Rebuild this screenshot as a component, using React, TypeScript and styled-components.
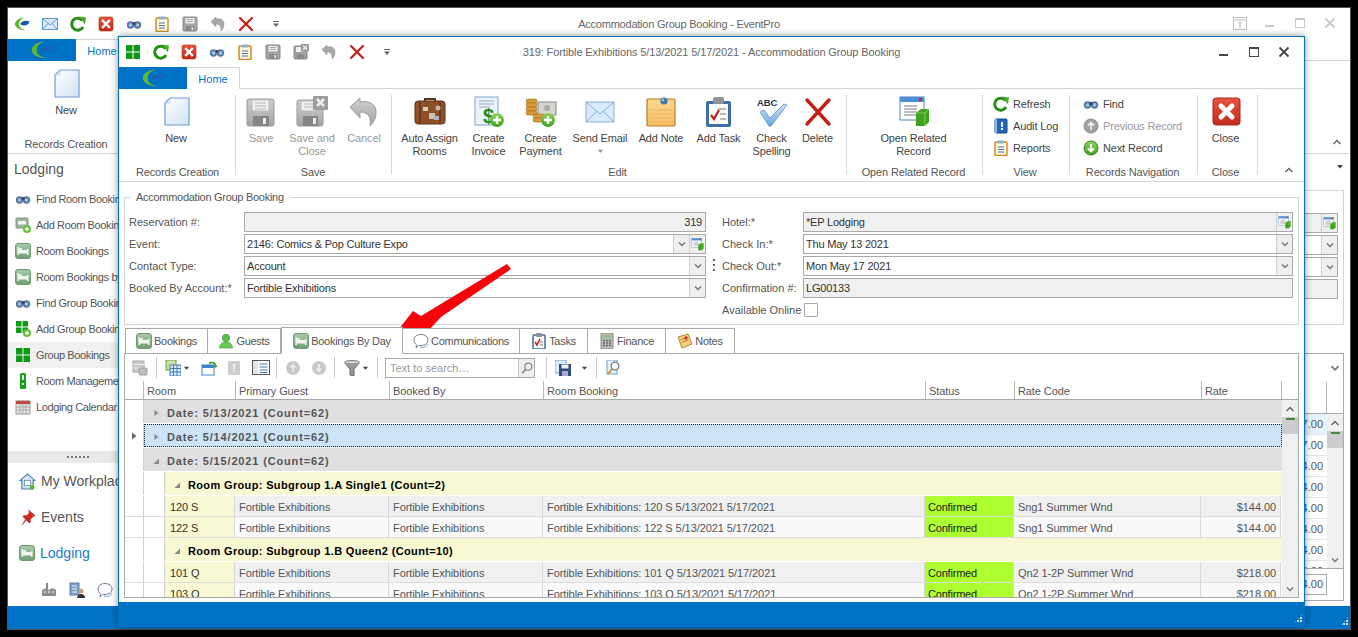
import React, { ReactNode } from "react";
import styled, { createGlobalStyle } from "styled-components";

const Global = createGlobalStyle`
  html, body { margin: 0; padding: 0; background: #000; height: 100%; overflow: hidden; }
  body { font-family: "Liberation Sans", Arial, sans-serif; font-size: 11px; color: #444; }
  * { box-sizing: border-box; }
`;

const icons: Record<string, [number, ReactNode]> = {
  logo: [40, <><path d="M26 6C12 6 3 13 3 20c0 8 11 14 25 14-11-2-17-7-17-14 0-7 6-12 15-14z" fill="#62b82e" /><path d="M15 21c6-5 15-7 24-7-4 5-13 9-24 7z" fill="#1f5ea8" /></>],
  logoSm: [16, <><path d="M11 1.500C5 1.500 1 5 1 8c0 3.500 5 6 11 6.500-4-1.500-7-3-7-6 0-3 2-6 6-7z" fill="#5cb531" /><path d="M6 8c2-3 6-4 9.500-2.500C15 9 10 11 6 8z" fill="#1a5ba6" /></>],
  mail: [16, <><rect x=".5" y="2.500" width="15" height="11" fill="#dbeafa" stroke="#5f9bd4" /><path d="M1 3l7 6 7-6M1 13l5-5.500M15 13l-5-5.500" fill="none" stroke="#5f9bd4" /></>],
  refresh: [16, <><path d="M12.500 4.500A6 6 0 1 0 13 11" fill="none" stroke="#2c8c1c" strokeWidth="3" /><path d="M9 .5l7 1-1 7z" fill="#46ad2a" /></>],
  closeRed: [16, <><rect x="1" y="1" width="14" height="14" rx="2" fill="url(#gRed)" stroke="#a82a18" strokeWidth=".6" /><path d="M5 5l6 6M11 5l-6 6" stroke="#fff" strokeWidth="2.400" strokeLinecap="square" /></>],
  closeBig: [32, <><rect x="3" y="2" width="27" height="27" rx="3" fill="url(#gRed)" stroke="#a82a18" /><path d="M11 10l11 11M22 10L11 21" stroke="#fff" strokeWidth="5" strokeLinecap="round" /></>],
  binoc: [16, <><circle cx="4.500" cy="9" r="3.700" fill="#557aa3" /><circle cx="11.500" cy="9" r="3.700" fill="#557aa3" /><circle cx="4.500" cy="9" r="1.800" fill="#a9c4e0" /><circle cx="11.500" cy="9" r="1.800" fill="#a9c4e0" /><rect x="6.500" y="6" width="3" height="3" fill="#3e4b59" /></>],
  clip: [16, <><rect x="2" y="2" width="12" height="13.500" rx="1" fill="#fff7dc" stroke="#c98a1a" strokeWidth="1.400" /><rect x="5" y=".5" width="6" height="3" fill="#8eb0d0" /><path d="M5 7h6M5 9.500h6M5 12h6" stroke="#4a78ab" /></>],
  save: [16, <><rect x="1" y="1" width="14" height="14" rx="1" fill="#a5a5a5" stroke="#8a8a8a" /><rect x="3.500" y="2" width="9" height="5.500" fill="#ececec" /><path d="M5 3.500h6M5 5.500h6" stroke="#aaa" /><rect x="4" y="10" width="8" height="5" fill="#8c8c8c" /><rect x="9.500" y="11" width="1.500" height="3" fill="#e6e6e6" /></>],
  saveClose: [16, <><rect x="1" y="2" width="13" height="13" rx="1" fill="#a0a0a0" stroke="#8a8a8a" /><rect x="3" y="3" width="7" height="5" fill="#ececec" /><rect x="4" y="10.500" width="7" height="4.500" fill="#888" /><rect x="8" y="0" width="8" height="7.500" fill="#9b9b9b" /><path d="M10 1.700l4 4M14 1.700l-4 4" stroke="#eee" strokeWidth="1.300" /></>],
  saveBig: [32, <><rect x="2" y="3" width="27" height="27" rx="2" fill="url(#gGray)" stroke="#999" /><rect x="7" y="4" width="17" height="11" fill="#f0f0f0" stroke="#bbb" /><path d="M10 7h11M10 10h11M10 13h11" stroke="#b5b5b5" /><rect x="8" y="20" width="16" height="10" fill="#858585" /><rect x="18" y="22" width="3" height="6" fill="#eee" /></>],
  saveCloseBig: [32, <><rect x="1" y="4" width="26" height="26" rx="2" fill="url(#gGray)" stroke="#999" /><rect x="5" y="5" width="15" height="10" fill="#f0f0f0" stroke="#bbb" /><path d="M8 8h9M8 11h9" stroke="#b5b5b5" /><rect x="7" y="20" width="15" height="10" fill="#858585" /><rect x="17" y="22" width="3" height="6" fill="#eee" /><rect x="17" y="0" width="15" height="14" rx="1" fill="#9c9c9c" /><path d="M21 3l7 7M28 3l-7 7" stroke="#eee" strokeWidth="2.600" /></>],
  undo: [16, <path d="M6 3c5-1 8 1 8 5 0 3-1 5-3 7 .5-3 0-7-5-7v3L1 5.500 6 1z" fill="#a8a8a8" stroke="#8f8f8f" strokeWidth=".5" />],
  undoBig: [32, <path d="M12 6c10-2 16 3 16 10 0 6-2 10-6 14 1-7 0-14-10-14v6L2 11 12 2z" fill="url(#gGray)" stroke="#9a9a9a" />],
  bigX: [16, <path d="M2 2l12 12M14 2L2 14" stroke="#c61f18" strokeWidth="2.200" strokeLinecap="round" />],
  xLarge: [32, <path d="M5 4l22 24M27 4L5 28" stroke="#c41d18" strokeWidth="3.400" strokeLinecap="round" />],
  gridGreen: [16, <><rect x="1" y="1" width="6.500" height="6.500" fill="#0c9a17" /><rect x="8.500" y="1" width="6.500" height="6.500" fill="#0c9a17" /><rect x="1" y="8.500" width="6.500" height="6.500" fill="#0c9a17" /><rect x="8.500" y="8.500" width="6.500" height="6.500" fill="#0c9a17" /></>],
  addGrid: [16, <><rect x="1" y="0" width="5.500" height="5.500" fill="#0c9a17" /><rect x="7.500" y="0" width="5.500" height="5.500" fill="#0c9a17" /><rect x="1" y="6.500" width="5.500" height="5.500" fill="#0c9a17" /><rect x="7.500" y="6.500" width="5.500" height="5.500" fill="#0c9a17" /><circle cx="12" cy="12" r="4" fill="#6bbf3a" /><path d="M10 12h4M12 10v4" stroke="#fff" strokeWidth="1.400" /></>],
  doc: [32, <><path d="M10 2h19v27H5V7z" fill="url(#gDoc)" stroke="#6d9ed2" strokeWidth="1.200" /><path d="M5 7h5V2" fill="none" stroke="#b5cde8" /></>],
  suitcase: [32, <><path d="M11 6V3h10v3" fill="none" stroke="#5c3318" strokeWidth="2" /><rect x="1" y="5" width="30" height="23" rx="3" fill="#8f5029" stroke="#5e3116" /><rect x="5" y="6" width="2" height="21" fill="#6d3a1b" /><rect x="25" y="6" width="2" height="21" fill="#6d3a1b" /><rect x="15" y="17" width="6" height="6" fill="#c8c3b5" /><rect x="9" y="11" width="5" height="4" fill="#d6d0bf" /><circle cx="24" cy="12" r="2.500" fill="#c0b9a5" /><rect x="20" y="20" width="5" height="4" fill="#aeb5ba" /></>],
  invoice: [32, <><rect x="2" y="1" width="23" height="28" fill="#eaf3fc" stroke="#7fa8d2" /><path d="M6 5h15M6 8h15M6 11h11" stroke="#9ab" /><text x="10" y="27" fontSize="20" fontWeight="bold" fontFamily="Liberation Sans" fill="#1c8a1c">$</text><circle cx="24" cy="24" r="7" fill="url(#gGreen)" /><path d="M20 24h8M24 20v8" stroke="#fff" strokeWidth="2.400" /></>],
  payment: [32, <><rect x="13" y="6" width="18" height="13" fill="#d6d6ce" stroke="#888" /><circle cx="22" cy="12" r="3" fill="#aaa" /><g fill="#d99a3a" stroke="#9a6a1d" strokeWidth=".6"><rect x="1" y="3" width="11" height="4" rx="2" /><rect x="1" y="7" width="11" height="4" rx="2" /><rect x="1" y="11" width="11" height="4" rx="2" /><rect x="1" y="15" width="11" height="4" rx="2" /><rect x="8" y="18" width="11" height="4" rx="2" /><rect x="8" y="22" width="11" height="4" rx="2" /></g><circle cx="23" cy="24" r="7" fill="url(#gGreen)" /><path d="M19 24h8M23 20v8" stroke="#fff" strokeWidth="2.400" /></>],
  mailBig: [32, <><rect x="2" y="6" width="28" height="20" fill="#d9ebfa" stroke="#7fb0dc" /><path d="M3 7l13 11L29 7M3 25l10-10M29 25L19 15" fill="none" stroke="#7fb0dc" /></>],
  note: [32, <><rect x="2" y="3" width="28" height="27" rx="1" fill="url(#gNote)" stroke="#c27a20" strokeWidth="1.200" /><path d="M4 14h24M4 18h24M4 22h24M4 26h24" stroke="#eab866" /><circle cx="19" cy="5" r="3.600" fill="#3e76b4" /><circle cx="18" cy="4" r="1.300" fill="#a9c9ea" /></>],
  taskBig: [32, <><rect x="3" y="5" width="25" height="26" rx="2" fill="#3f6ea6" /><rect x="6" y="8" width="19" height="20" fill="#fafafa" /><rect x="10" y="1" width="11" height="7" rx="2" fill="#8f9398" /><path d="M8 19l3 4 5-9" fill="none" stroke="#c41d18" strokeWidth="2.200" /><path d="M15 13h8M17 18h6M17 23h6" stroke="#777" /></>],
  check: [32, <><text x="1" y="10" fontSize="9.500" fontWeight="bold" fontFamily="Liberation Sans" fill="#27324a">ABC</text><path d="M4 16l4-2 6 8L28 8l3 1-16 21h-2z" fill="url(#gBlue)" stroke="#5a8fc4" strokeWidth=".8" /></>],
  openRel: [32, <><rect x="2" y="1" width="24" height="23" fill="#fff" stroke="#4c84c4" /><rect x="2" y="1" width="24" height="5" fill="#4c8fd6" /><rect x="21" y="2" width="3" height="3" fill="#d22" /><path d="M6 10h13M6 13h13M6 16h13M6 19h13" stroke="#778" /><path d="M18 17l5-4h8v13l-4 4h-9z" fill="#3ea21c" /><path d="M18 17h9v13M27 17l4-4" fill="none" stroke="#7ed055" /></>],
  audit: [16, <><rect x="2" y="1" width="12" height="14" rx="1" fill="#1f66bd" stroke="#12458a" /><rect x="2" y="1" width="2" height="14" fill="#8fb9e6" /><rect x="8" y="4" width="2" height="5" fill="#fff" /><rect x="8" y="10" width="2" height="2" fill="#fff" /></>],
  prevC: [16, <><circle cx="8" cy="8" r="7" fill="#a2a2a2" stroke="#8a8a8a" /><path d="M8 12V5M5 7.500L8 4.500l3 3" fill="none" stroke="#e8e8e8" strokeWidth="1.800" /></>],
  nextC: [16, <><circle cx="8" cy="8" r="7" fill="url(#gGreen)" stroke="#2f7f1f" /><path d="M8 4v7M5 8.500l3 3 3-3" fill="none" stroke="#fff" strokeWidth="1.800" /></>],
  upG: [16, <><circle cx="8" cy="8" r="7" fill="#c9c9c9" /><path d="M8 12V5M5.500 7.500L8 5l2.500 2.500" fill="none" stroke="#efefef" strokeWidth="1.600" /></>],
  downG: [16, <><circle cx="8" cy="8" r="7" fill="#c9c9c9" /><path d="M8 4v7M5.500 8.500L8 11l2.500-2.500" fill="none" stroke="#efefef" strokeWidth="1.600" /></>],
  bed: [16, <><rect x=".5" y=".5" width="15" height="15" rx="2.500" fill="url(#gBed)" stroke="#6e9a70" /><rect x="2.500" y="4" width="1.300" height="8" fill="#fff" /><rect x="12.200" y="6" width="1.300" height="6" fill="#fff" /><rect x="3.500" y="7" width="9" height="3.500" fill="#f4f8f4" /><rect x="4" y="5" width="3" height="2" fill="#e3efe3" /></>],
  guest: [16, <><circle cx="8" cy="5" r="3.700" fill="#5cbc4a" stroke="#3a9a2c" strokeWidth=".6" /><path d="M1.500 15c0-4 3-6 6.500-6s6.500 2 6.500 6z" fill="#6bc957" stroke="#3a9a2c" strokeWidth=".6" /></>],
  bubble: [16, <><path d="M8 1.500c4 0 7 2.300 7 5.500s-3 5.500-7 5.500c-1 0-1.500 0-2.500-.2L3 15l.5-3.200C2 10.800 1 9 1 7c0-3.200 3-5.500 7-5.500z" fill="#fff" stroke="#6d7e8f" /><path d="M7 14c3 1 7 0 8-3" fill="none" stroke="#6aa8dc" /></>],
  taskTab: [16, <><rect x="2" y="2" width="12" height="14" rx="1" fill="#fff" stroke="#3f6ea6" strokeWidth="1.500" /><rect x="5" y="0" width="6" height="4" rx="1" fill="#8f9398" /><path d="M4 9l2 3 3-6" fill="none" stroke="#c41d18" strokeWidth="1.500" /><path d="M9 9h3M9 12h3" stroke="#777" /></>],
  calc: [16, <><rect x="2" y="0" width="12" height="16" rx="1" fill="#b9bdb6" stroke="#85897f" /><rect x="4" y="2" width="8" height="3" fill="#8fc28a" /><path d="M4 7.500h2M7 7.500h2M10 7.500h2M4 10h2M7 10h2M10 10h2M4 12.500h2M7 12.500h2M10 12.500h2" stroke="#666" strokeWidth="1.400" /></>],
  noteTab: [16, <><path d="M1 4l10-3 4 10-10 4z" fill="#f2cf7a" stroke="#b58a32" /><path d="M3.500 7l7-2.500M4.500 9.500l7-2.500" stroke="#b58a32" /><circle cx="9" cy="5" r="1.700" fill="#c33" /></>],
  addRoom: [16, <><rect x="1" y="1" width="12" height="10" rx="1" fill="#9cb49c" stroke="#7a947a" /><rect x="3" y="4" width="8" height="3.500" fill="#f2f6f2" /><circle cx="12" cy="12" r="4" fill="#6bbf3a" /><path d="M10 12h4M12 10v4" stroke="#fff" strokeWidth="1.400" /></>],
  remote: [16, <><rect x="5" y="0" width="6" height="16" rx="1.500" fill="#14a018" /><rect x="7" y="2" width="2" height="5" rx="1" fill="#fff" /><rect x="7" y="10" width="2" height="2" fill="#cfe" /></>],
  calendar: [16, <><rect x="1" y="2" width="14" height="13" fill="#e4e4e4" stroke="#999" /><rect x="1" y="2" width="14" height="3" fill="#c9423c" /><path d="M4 1v2M8 1v2M12 1v2" stroke="#888" /><path d="M1 8h14M1 11h14M5 5v10M8 5v10M11 5v10" stroke="#aaa" /></>],
  home: [18, <><path d="M9 1L1 8h2v9h12V8h2z" fill="#cfe1f3" stroke="#4d7fae" strokeWidth="1.200" /><rect x="6" y="8" width="6" height="5" fill="#fff" stroke="#4d7fae" strokeWidth=".7" /><circle cx="14" cy="15" r="2.500" fill="#5cb531" /></>],
  pin: [18, <path d="M10 1l7 6-2 1-3 3 0 3-1 1-3-3-5 5 4-6-3-3 1-1 3 0 3-3z" fill="#d3261f" stroke="#a11814" strokeWidth=".4" />],
  factory: [16, <><rect x="5" y="1" width="2" height="6" fill="#888" /><path d="M1 8l4-2 3 2 3-2 4 2v6H1z" fill="#8c8c8c" /><path d="M3 10h2M7 10h2M11 10h2" stroke="#ddd" strokeWidth="1.500" /></>],
  bldPerson: [16, <><rect x="1" y="1" width="9" height="12" fill="#7fa0c8" stroke="#5d7ea6" /><path d="M3 4h5M3 7h5M3 10h5" stroke="#e5eef8" /><circle cx="12" cy="9" r="2.500" fill="#c99f77" /><path d="M8 16c0-3 2-4 4-4s4 1 4 4z" fill="#333" /></>],
  tbGrid: [16, <><rect x="1" y="1" width="11" height="11" fill="#c9c9c9" stroke="#aaa" /><path d="M1 4.500h11M1 8h11" stroke="#eee" /><rect x="7" y="8" width="8" height="7" rx="1" fill="#bdbdbd" stroke="#a0a0a0" /></>],
  tbColumns: [16, <><rect x="1" y="0" width="10" height="10" fill="#c8e0a8" stroke="#6da32f" /><rect x="5" y="5" width="11" height="11" fill="#dcebfa" stroke="#3a7cc4" /><path d="M5 8.500h11M5 12h11M8.500 5v11M12 5v11" stroke="#3a7cc4" /></>],
  tbWindow: [16, <><rect x="1" y="5" width="12" height="10" fill="#fff" stroke="#3a84cc" /><rect x="1" y="5" width="12" height="3" fill="#3a84cc" /><path d="M8 3.500c3-2 6-1 6.500 2" fill="none" stroke="#3c9a20" strokeWidth="1.600" /><path d="M12.500 5.500h4L14.500 8z" fill="#3c9a20" /></>],
  tbBook: [16, <><rect x="2" y="1" width="12" height="14" rx="1" fill="#cdcdcd" /><rect x="7" y="4" width="2" height="5" fill="#efefef" /><rect x="7" y="10" width="2" height="2" fill="#efefef" /></>],
  tbPanel: [18, <><rect x=".5" y="1.500" width="17" height="14" fill="#fff" stroke="#555" /><rect x="1" y="2" width="5" height="13" fill="#e5e5e5" /><path d="M7.500 5h8M7.500 8h8M7.500 11h8M7.500 13.500h8" stroke="#4a78ab" /></>],
  funnel: [16, <><ellipse cx="8" cy="2.500" rx="7.500" ry="2" fill="#d8d8d8" stroke="#777" /><path d="M1 3l5 6v6l4 1V9l5-6" fill="#9a9a9a" stroke="#666" /></>],
  tbSave: [16, <><rect x="0" y="0" width="11" height="13" fill="#dcebfa" stroke="#6aa0d6" /><rect x="4" y="4" width="12" height="12" fill="#2f4c7a" /><rect x="6.500" y="4.500" width="7" height="4" fill="#e8eef6" /><rect x="7" y="11" width="6" height="5" fill="#aac" /></>],
  tbZoom: [16, <><rect x="1" y="0" width="10" height="14" fill="#eaf3fc" stroke="#6aa0d6" /><circle cx="9" cy="6" r="3.800" fill="#fff" stroke="#777" strokeWidth="1.300" /><path d="M6 9l-4 5" stroke="#c9922e" strokeWidth="2" /></>],
  search: [16, <><circle cx="9.500" cy="6.500" r="4" fill="none" stroke="#888" strokeWidth="1.400" /><path d="M6.500 9.500L2.500 14" stroke="#888" strokeWidth="2" /></>],
  chev: [10, <path d="M2 3.500l3 3 3-3" fill="none" stroke="#777" strokeWidth="1.500" />],
  chevUp: [10, <path d="M1.500 7l3.500-3.500L8.500 7" fill="none" stroke="#666" strokeWidth="1.500" />],
  caret: [8, <path d="M1 3h6L4 6.500z" fill="#444" />],
  qatDrop: [8, <><path d="M1 1h6v1H1z" fill="#666" /><path d="M1 3.500h6L4 7z" fill="#666" /></>],
  triR: [8, <path d="M2.500 1l4 3-4 3z" fill="#888" />],
  triD: [8, <path d="M7 1.500V7H1.500z" fill="#888" />],
  triRDark: [8, <path d="M2 0.500l4.500 3.500L2 7.500z" fill="#666" />],
  winPin: [14, <><rect x=".5" y=".5" width="13" height="12" fill="none" stroke="#bbb" /><path d="M.5 3h13M7 11V5M4.500 7L7 4.500 9.500 7" fill="none" stroke="#bbb" /></>],
  winMin: [12, <rect x="1" y="8" width="9" height="2" fill="currentColor" />],
  winMax: [12, <><rect x="1.500" y="1.500" width="9" height="9" fill="none" stroke="currentColor" /><rect x="1" y="1" width="10" height="2" fill="currentColor" /></>],
  winClose: [12, <path d="M1.500 1.500l9 9M10.500 1.500l-9 9" stroke="currentColor" strokeWidth="1.800" />],
};

const Svg = styled.svg<{ $s: number }>`
  width: ${(p) => p.$s}px;
  height: ${(p) => p.$s}px;
  flex: none;
  display: block;
`;

const Icon = ({ n, s = 16 }: { n: string; s?: number }) => {
  const [vb, body] = icons[n];
  return (
    <Svg viewBox={`0 0 ${vb} ${vb}`} $s={s}>
      {body}
    </Svg>
  );
};

const Defs = () => (
  <svg width="0" height="0" style={{ position: "absolute" }}>
    <defs>
      <linearGradient id="gRed" x1="0" y1="0" x2="0" y2="1"><stop offset="0" stopColor="#e8543e" /><stop offset="1" stopColor="#c22b1c" /></linearGradient>
      <linearGradient id="gGreen" x1="0" y1="0" x2="0" y2="1"><stop offset="0" stopColor="#8fd45a" /><stop offset="1" stopColor="#3f9f22" /></linearGradient>
      <linearGradient id="gGray" x1="0" y1="0" x2="0" y2="1"><stop offset="0" stopColor="#d0d0d0" /><stop offset="1" stopColor="#a4a4a4" /></linearGradient>
      <linearGradient id="gDoc" x1="0" y1="0" x2="1" y2="1"><stop offset="0" stopColor="#ffffff" /><stop offset="1" stopColor="#cfe2f6" /></linearGradient>
      <linearGradient id="gNote" x1="0" y1="0" x2="0" y2="1"><stop offset="0" stopColor="#f9d98f" /><stop offset="1" stopColor="#f5bd62" /></linearGradient>
      <linearGradient id="gBlue" x1="0" y1="0" x2="0" y2="1"><stop offset="0" stopColor="#cfe4f8" /><stop offset="1" stopColor="#6ea6dc" /></linearGradient>
      <linearGradient id="gBed" x1="0" y1="0" x2="0" y2="1"><stop offset="0" stopColor="#a8cba8" /><stop offset="1" stopColor="#6f9e72" /></linearGradient>
    </defs>
  </svg>
);

/* ---------- Windows ---------- */
const Win = styled.div<{ $l: number; $t: number; $w: number; $h: number; $front?: boolean }>`
  position: absolute;
  left: ${(p) => p.$l}px;
  top: ${(p) => p.$t}px;
  width: ${(p) => p.$w}px;
  height: ${(p) => p.$h}px;
  background: #fff;
  display: flex;
  flex-direction: column;
  overflow: hidden;
  border: 1px solid ${(p) => (p.$front ? "#0072c6" : "#555")};
  ${(p) => p.$front && "box-shadow: 0 0 7px rgba(0,0,0,.45);"}
`;

const TitleRow = styled.div<{ $h: number; $dim?: boolean }>`
  height: ${(p) => p.$h}px;
  flex: none;
  display: grid;
  grid-template-columns: 1fr auto 1fr;
  align-items: center;
  font-size: 11px;
  letter-spacing: ${(p) => (p.$dim ? -0.23 : -0.11)}px;
  color: #666;
`;
const Qat = styled.div`display: flex; align-items: center;`;
const QatSlot = styled.div<{ $w?: number }>`
  width: ${(p) => p.$w ?? 28}px;
  display: flex;
  justify-content: center;
`;
const WinButtons = styled.div<{ $dim?: boolean }>`
  display: flex;
  justify-content: flex-end;
  padding-right: 5px;
  color: ${(p) => (p.$dim ? "#c8c8c8" : "#444")};
`;
const WinBtn = styled.div`
  width: 30px;
  display: flex;
  justify-content: center;
`;

const TabRow = styled.div`
  height: 22px;
  flex: none;
  display: flex;
  border-bottom: 1px solid #d4d4d4;
`;
const AppTab = styled.div`
  width: 68px;
  background: #0072c6;
  display: flex;
  align-items: center;
  justify-content: center;
  margin-bottom: -1px;
`;
const HomeTab = styled.div`
  width: 53px;
  margin-bottom: -1px;
  border: 1px solid #d4d4d4;
  border-bottom: 1px solid #fff;
  border-left: 0;
  background: #fff;
  color: #0072c6;
  font-size: 11px;
  padding-top: 1px;
  display: flex;
  align-items: center;
  justify-content: center;
`;

const Ribbon = styled.div`
  height: 93px;
  flex: none;
  display: flex;
  border-bottom: 1px solid #d4d4d4;
  position: relative;
  letter-spacing: -0.15px;
`;
const Group = styled.div<{ $w: number }>`
  width: ${(p) => p.$w}px;
  flex: none;
  position: relative;
  display: flex;
  flex-direction: column;
  &::after {
    content: "";
    position: absolute;
    right: 0;
    top: 6px;
    bottom: 7px;
    width: 1px;
    background: #d8d8d8;
  }
`;
const GroupBody = styled.div<{ $pl?: number; $pr?: number }>`
  flex: 1;
  display: flex;
  padding-left: ${(p) => p.$pl ?? 0}px;
  padding-right: ${(p) => p.$pr ?? 0}px;
  justify-content: ${(p) => (p.$pl === undefined ? "center" : "flex-start")};
`;
const GroupLabel = styled.div<{ $pr?: number }>`
  height: 16px;
  line-height: 14px;
  text-align: center;
  color: #555;
  white-space: nowrap;
  padding-right: ${(p) => p.$pr ?? 0}px;
`;
const RibBtn = styled.div<{ $w: number; $off?: boolean }>`
  width: ${(p) => p.$w}px;
  flex: none;
  padding-top: 7px;
  display: flex;
  flex-direction: column;
  align-items: center;
  color: ${(p) => (p.$off ? "#9a9a9a" : "#444")};
`;
const RibLabel = styled.div`
  margin-top: 4px;
  line-height: 13px;
  text-align: center;
  white-space: pre-line;
`;
const RibCaret = styled.div`
  margin-top: 2px;
  display: flex;
  justify-content: center;
  opacity: 0.6;
`;
const SmallList = styled.div`
  padding-top: 4px;
  display: flex;
  flex-direction: column;
`;
const SmallItem = styled.div<{ $off?: boolean }>`
  height: 22px;
  display: flex;
  align-items: center;
  gap: 4px;
  white-space: nowrap;
  color: ${(p) => (p.$off ? "#999" : "#444")};
`;
const Collapse = styled.div<{ $r: number }>`
  position: absolute;
  right: ${(p) => p.$r}px;
  bottom: 6px;
`;

/* ---------- Form ---------- */
const FormBox = styled.fieldset`
  margin: 8px 5px 0 5px;
  padding: 8px 5px 0 4px;
  height: 135px;
  flex: none;
  border: 1px solid #d4d4d4;
  min-width: 0;
`;
const Legend = styled.legend`
  margin-left: 1px;
  padding: 0 6px;
  height: 14px;
  line-height: 14px;
  color: #555;
  letter-spacing: -0.28px;
`;
const FormGrid = styled.div`
  display: grid;
  grid-template-columns: 115px 462px 16px 81px 490px;
  grid-auto-rows: 20px;
  row-gap: 2px;
  align-items: center;
`;
const Label = styled.div`
  color: #555;
  white-space: nowrap;
`;
const Field = styled.div<{ $ro?: boolean }>`
  height: 20px;
  display: flex;
  border: 1px solid #a9a9a9;
  background: ${(p) => (p.$ro ? "#f0f0f0" : "#fff")};
  color: #333;
`;
const FieldText = styled.div<{ $right?: boolean }>`
  flex: 1;
  line-height: 18px;
  padding: 0 3px 0 2px;
  letter-spacing: -0.2px;
  text-align: ${(p) => (p.$right ? "right" : "left")};
  white-space: nowrap;
  overflow: hidden;
`;
const FieldBtn = styled.div`
  width: 16px;
  flex: none;
  background: #efefef;
  border-left: 1px solid #d0d0d0;
  display: flex;
  align-items: center;
  justify-content: center;
`;
const Dots = styled.div`
  width: 2px;
  height: 14px;
  margin-left: 7px;
  background: repeating-linear-gradient(#666 0 2px, transparent 2px 5px);
`;
const Box = styled.div`
  width: 14px;
  height: 14px;
  margin-left: 1px;
  border: 1px solid #a9a9a9;
  border-radius: 1px;
  background: #fff;
`;

/* ---------- Tabs + grid ---------- */
const Tabs = styled.div`
  margin: 2px 0 0 6px;
  height: 26px;
  flex: none;
  display: flex;
  align-items: flex-end;
  position: relative;
  z-index: 1;
`;
const TabItem = styled.div<{ $w: number; $on?: boolean }>`
  width: ${(p) => p.$w}px;
  height: ${(p) => (p.$on ? 27 : 25)}px;
  margin-bottom: ${(p) => (p.$on ? -1 : 0)}px;
  display: flex;
  align-items: center;
  justify-content: center;
  gap: 2px;
  background: #fff;
  color: #555;
  letter-spacing: -0.28px;
  white-space: nowrap;
  border: 1px solid #a9a9a9;
  border-left-width: ${(p) => (p.$on ? 1 : 0)}px;
  border-bottom: ${(p) => (p.$on ? "1px solid #fff" : "0")};
  &:first-child { border-left-width: 1px; }
`;
const Panel = styled.div`
  margin: 0 5px;
  flex: none;
  height: 245px;
  border: 1px solid #a9a9a9;
  display: flex;
  flex-direction: column;
  overflow: hidden;
`;
const Toolbar = styled.div`
  height: 27px;
  flex: none;
  display: flex;
  align-items: center;
`;
const Tool = styled.div<{ $ml: number; $w?: number }>`
  margin-left: ${(p) => p.$ml}px;
  width: ${(p) => p.$w ?? 16}px;
  flex: none;
  display: flex;
  justify-content: center;
`;
const ToolSep = styled.div<{ $ml: number }>`
  margin-left: ${(p) => p.$ml}px;
  width: 1px;
  height: 21px;
  background: #c8c8c8;
  flex: none;
`;
const SearchBox = styled.div`
  margin-left: 7px;
  width: 150px;
  height: 20px;
  flex: none;
  display: flex;
  border: 1px solid #a9a9a9;
  color: #999;
  line-height: 18px;
`;
const SearchText = styled.div`
  flex: 1;
  padding: 0 4px;
`;
const SearchBtn = styled.div`
  width: 16px;
  background: #eee;
  border-left: 1px solid #c8c8c8;
  display: flex;
  align-items: center;
  justify-content: center;
`;
const Header = styled.div`
  height: 19px;
  flex: none;
  display: flex;
  border-bottom: 1px solid #a9a9a9;
  padding-left: 18px;
`;
const HeadCell = styled.div<{ $w: number }>`
  width: ${(p) => p.$w}px;
  flex: none;
  padding: 0 3px;
  line-height: 20px;
  color: #555;
  letter-spacing: -0.1px;
  border-left: 1px solid #b8b8b8;
  &:last-child { border-right: 1px solid #b8b8b8; }
`;
const GridBody = styled.div`
  flex: 1;
  min-height: 0;
  display: flex;
  overflow: hidden;
`;
const Rows = styled.div`
  width: 1157px;
  flex: none;
  display: flex;
  flex-direction: column;
`;
const Row = styled.div<{ $h: number; $gap?: string }>`
  height: ${(p) => p.$h}px;
  flex: none;
  display: flex;
  border-bottom: 1px solid ${(p) => p.$gap ?? "#fff"};
`;
const Gutter = styled.div`
  width: 19px;
  flex: none;
  background: #fff;
  border-right: 1px solid #cfcfcf;
  display: flex;
  align-items: center;
  justify-content: center;
`;
const Indent = styled.div`
  width: 21px;
  flex: none;
  background: #fff;
  border-right: 1px solid #cfcfcf;
`;
const GroupCell = styled.div<{ $kind: "date" | "sel" | "room" }>`
  flex: 1;
  display: flex;
  align-items: center;
  gap: 7px;
  padding: 2px 0 0 8px;
  font-weight: bold;
  font-size: 11px;
  letter-spacing: ${(p) => (p.$kind === "room" ? 0.35 : 0.85)}px;
  color: ${(p) => (p.$kind === "room" ? "#000" : "#555")};
  background: ${(p) => (p.$kind === "room" ? "#f8f9d2" : p.$kind === "sel" ? "#cde4f7" : "#e0e0e0")};
  ${(p) => p.$kind === "sel" && "outline: 1px dotted #222; outline-offset: -1px;"}
`;
const Cell = styled.div<{ $w: number; $bg: string; $right?: boolean; $c?: string; $ls?: number; $pl?: number }>`
  width: ${(p) => p.$w}px;
  flex: none;
  background: ${(p) => p.$bg};
  color: ${(p) => p.$c ?? "#555"};
  padding: 0 4px 0 ${(p) => p.$pl ?? 4}px;
  line-height: 22px;
  letter-spacing: ${(p) => p.$ls ?? -0.08}px;
  text-align: ${(p) => (p.$right ? "right" : "left")};
  border-right: 1px solid #d8d8d8;
  white-space: nowrap;
  overflow: hidden;
`;
const Scroll = styled.div`
  width: 16px;
  flex: none;
  background: #f0f0f0;
  display: flex;
  flex-direction: column;
`;
const ScrollBtn = styled.div`
  height: 17px;
  flex: none;
  display: flex;
  align-items: center;
  justify-content: center;
`;
const Thumb = styled.div`
  height: 17px;
  flex: none;
  background: #cdcdcd;
  position: relative;
  &::before {
    content: "";
    position: absolute;
    left: 4px;
    top: 1px;
    width: 9px;
    height: 2px;
    background: #3f8a3f;
  }
`;
const ScrollFill = styled.div`flex: 1;`;
const StatusBar = styled.div<{ $h: number }>`
  height: ${(p) => p.$h}px;
  flex: none;
  margin-top: auto;
  background: #0072c6;
  position: relative;
`;
const Grip = styled.div`
  position: absolute;
  right: 1px;
  bottom: 3px;
  width: 9px;
  height: 9px;
  background:
    radial-gradient(circle at 1px 1px, #cfe4f5 1px, transparent 1px) 0 0 / 3px 3px;
  clip-path: polygon(100% 0, 100% 100%, 0 100%);
`;
const Arrow = styled.svg`
  position: absolute;
  left: 0;
  top: 0;
  width: 1358px;
  height: 637px;
  pointer-events: none;
`;

/* ---------- Back window ---------- */
const BackBody = styled.div`
  flex: 1;
  min-height: 0;
  display: flex;
`;
const Sidebar = styled.div`
  width: 220px;
  flex: none;
  display: flex;
  flex-direction: column;
`;
const SideTitle = styled.div`
  height: 31px;
  padding: 1px 0 0 6px;
  line-height: 28px;
  font-size: 14px;
  color: #555;
`;
const SideList = styled.div`
  padding-top: 1px;
  height: 266px;
  display: flex;
  flex-direction: column;
  flex: none;
`;
const SideItem = styled.div<{ $on?: boolean }>`
  height: 26px;
  padding-left: 7px;
  display: flex;
  align-items: center;
  gap: 5px;
  color: #555;
  letter-spacing: -0.38px;
  white-space: nowrap;
  background: ${(p) => (p.$on ? "#f0f0f0" : "transparent")};
`;
const Splitter = styled.div`
  height: 12px;
  flex: none;
  background: #e9e9e9;
  display: flex;
  justify-content: center;
  align-items: center;
  &::before {
    content: "";
    width: 22px;
    height: 2px;
    margin-left: -80px;
    background: repeating-linear-gradient(90deg, #777 0 2px, transparent 2px 4px);
  }
`;
const NavItem = styled.div<{ $on?: boolean }>`
  height: 36px;
  padding-left: 11px;
  display: flex;
  align-items: center;
  gap: 5px;
  font-size: 14px;
  color: ${(p) => (p.$on ? "#1a7cc8" : "#555")};
  white-space: nowrap;
`;
const NavList = styled.div`
  display: flex;
  flex-direction: column;
`;
const MiniBar = styled.div`
  padding: 11px 0 0 33px;
  display: flex;
  gap: 12px;
`;
const BackMain = styled.div`
  flex: 1;
  min-width: 0;
  display: flex;
  flex-direction: column;
`;
const BackFilter = styled.div`
  height: 28px;
  flex: none;
  display: flex;
  justify-content: flex-end;
  align-items: center;
  padding: 0 6px 4px 0;
`;
const BackForm = styled.div`
  margin: 8px 6px 0 0;
  height: 135px;
  flex: none;
  border: 1px solid #d4d4d4;
  padding: 22px 5px 0 0;
  display: flex;
  flex-direction: column;
  gap: 2px;
`;
const BackPanel = styled.div`
  margin: 28px 6px 0 0;
  height: 248px;
  flex: none;
  border: 1px solid #a9a9a9;
  display: flex;
  flex-direction: column;
`;
const BackTool = styled.div`
  height: 28px;
  flex: none;
  display: flex;
  justify-content: flex-end;
  align-items: center;
  padding-right: 2px;
`;
const BackHead = styled.div`
  height: 32px;
  flex: none;
  border-bottom: 1px solid #a9a9a9;
  padding-right: 16px;
  display: flex;
  justify-content: flex-end;
  &::after {
    content: "";
    width: 1px;
    background: #b8b8b8;
  }
`;
const BackGrid = styled.div`
  height: 155px;
  flex: none;
  display: flex;
  overflow: hidden;
  border-bottom: 1px solid #a9a9a9;
`;
const BackRows = styled.div`
  flex: 1;
  display: flex;
  flex-direction: column;
`;
const BackRow = styled.div<{ $sel?: boolean }>`
  height: 21px;
  flex: none;
  text-align: right;
  padding-right: 4px;
  line-height: 20px;
  color: #555;
  background: ${(p) => (p.$sel ? "#e8f2fb" : "#fff")};
  border-bottom: 1px solid #e4e4e4;
`;
const BackFoot = styled.div`
  flex: 1;
  display: flex;
  justify-content: flex-end;
  padding: 5px 16px 0 0;
`;
const FootBox = styled.div`
  width: 80px;
  height: 21px;
  border: 1px solid #a9a9a9;
  text-align: right;
  padding-right: 3px;
  line-height: 19px;
  color: #555;
`;

/* ---------- Data ---------- */
const cols = [70, 154, 154, 382, 89, 187, 80];

const DataRow = ({ room, alt, code, rate }: { room: string; alt?: boolean; code: string; rate: string }) => {
  const bg = alt ? "#f9f9f9" : "#f0f0f0";
  return (
    <Row $h={21} $gap="#dcdcdc">
      <Gutter />
      <Indent />
      <Cell $w={cols[0]} $bg="#f8f9d2" $c="#333" $pl={5}>{room}</Cell>
      <Cell $w={cols[1]} $bg={bg}>Fortible Exhibitions</Cell>
      <Cell $w={cols[2]} $bg={bg}>Fortible Exhibitions</Cell>
      <Cell $w={cols[3]} $bg={bg}>{`Fortible Exhibitions: ${room} 5/13/2021 5/17/2021`}</Cell>
      <Cell $w={cols[4]} $bg="#adff2f" $c="#222" $ls={-0.2} $pl={3}>Confirmed</Cell>
      <Cell $w={cols[5]} $bg={bg} $ls={-0.1}>{code}</Cell>
      <Cell $w={cols[6]} $bg={bg} $right>{rate}</Cell>
    </Row>
  );
};

const tabs: [string, string, number, boolean?][] = [
  ["Bookings", "bed", 83],
  ["Guests", "guest", 73],
  ["Bookings By Day", "bed", 122, true],
  ["Communications", "bubble", 117],
  ["Tasks", "taskTab", 68],
  ["Finance", "calc", 78],
  ["Notes", "noteTab", 69],
];

const Back = () => (
  <Win $l={7} $t={7} $w={1344} $h={623}>
    <TitleRow $h={31} $dim>
      <Qat>
        {["logoSm", "mail", "refresh", "closeRed", "binoc", "clip", "save", "undo", "bigX"].map((n, i) => (
          <QatSlot key={i}><Icon n={n} /></QatSlot>
        ))}
        <QatSlot $w={32}><Icon n="qatDrop" s={8} /></QatSlot>
      </Qat>
      <div>Accommodation Group Booking - EventPro</div>
      <WinButtons $dim>
        <WinBtn><Icon n="winPin" s={14} /></WinBtn>
        <WinBtn><Icon n="winMin" s={12} /></WinBtn>
        <WinBtn><Icon n="winMax" s={12} /></WinBtn>
        <WinBtn><Icon n="winClose" s={12} /></WinBtn>
      </WinButtons>
    </TitleRow>
    <TabRow>
      <AppTab><Icon n="logo" s={24} /></AppTab>
      <HomeTab>Home</HomeTab>
    </TabRow>
    <Ribbon>
      <Group $w={116}>
        <GroupBody>
          <RibBtn $w={80}><Icon n="doc" s={32} /><RibLabel>New</RibLabel></RibBtn>
        </GroupBody>
        <GroupLabel>Records Creation</GroupLabel>
      </Group>
      <Collapse $r={8}><Icon n="chevUp" s={10} /></Collapse>
    </Ribbon>
    <BackBody>
      <Sidebar>
        <SideTitle>Lodging</SideTitle>
        <SideList>
          <SideItem><Icon n="binoc" />Find Room Bookings</SideItem>
          <SideItem><Icon n="addRoom" />Add Room Booking</SideItem>
          <SideItem><Icon n="bed" />Room Bookings</SideItem>
          <SideItem><Icon n="bed" />Room Bookings by Day</SideItem>
          <SideItem><Icon n="binoc" />Find Group Bookings</SideItem>
          <SideItem><Icon n="addGrid" />Add Group Booking</SideItem>
          <SideItem $on><Icon n="gridGreen" />Group Bookings</SideItem>
          <SideItem><Icon n="remote" />Room Management</SideItem>
          <SideItem><Icon n="calendar" />Lodging Calendar</SideItem>
        </SideList>
        <Splitter />
        <NavList>
          <NavItem><Icon n="home" s={17} />My Workplace</NavItem>
          <NavItem><Icon n="pin" s={17} />Events</NavItem>
          <NavItem $on><Icon n="bed" />Lodging</NavItem>
        </NavList>
        <MiniBar>
          <Icon n="factory" />
          <Icon n="bldPerson" />
          <Icon n="bubble" />
        </MiniBar>
      </Sidebar>
      <BackMain>
        <BackFilter><Icon n="caret" s={8} /></BackFilter>
        <BackForm>
          <Field $ro><FieldText /><FieldBtn><Icon n="openRel" s={13} /></FieldBtn></Field>
          <Field><FieldText /><FieldBtn><Icon n="chev" s={10} /></FieldBtn></Field>
          <Field><FieldText /><FieldBtn><Icon n="chev" s={10} /></FieldBtn></Field>
          <Field $ro><FieldText /></Field>
        </BackForm>
        <BackPanel>
          <BackTool><Icon n="chev" s={12} /></BackTool>
          <BackHead />
          <BackGrid>
            <BackRows>
              <BackRow $sel>$147.00</BackRow>
              <BackRow>$147.00</BackRow>
              <BackRow>$144.00</BackRow>
              <BackRow>$144.00</BackRow>
              <BackRow>$144.00</BackRow>
              <BackRow>$144.00</BackRow>
              <BackRow>$144.00</BackRow>
              <BackRow>$144.00</BackRow>
            </BackRows>
            <Scroll>
              <ScrollBtn><Icon n="chevUp" s={10} /></ScrollBtn>
              <Thumb />
              <ScrollFill />
              <ScrollBtn><Icon n="chev" s={10} /></ScrollBtn>
            </Scroll>
          </BackGrid>
          <BackFoot><FootBox>$1,004.00</FootBox></BackFoot>
        </BackPanel>
      </BackMain>
    </BackBody>
    <StatusBar $h={23}><Grip /></StatusBar>
  </Win>
);

const Front = () => (
  <Win $l={118} $t={36} $w={1187} $h={591} $front>
    <TitleRow $h={30}>
      <Qat>
        {["gridGreen", "refresh", "closeRed", "binoc", "clip", "save", "saveClose", "undo", "bigX"].map((n, i) => (
          <QatSlot key={i}><Icon n={n} /></QatSlot>
        ))}
        <QatSlot $w={32}><Icon n="qatDrop" s={8} /></QatSlot>
      </Qat>
      <div>319: Fortible Exhibitions 5/13/2021 5/17/2021 - Accommodation Group Booking</div>
      <WinButtons>
        <WinBtn><Icon n="winMin" s={12} /></WinBtn>
        <WinBtn><Icon n="winMax" s={12} /></WinBtn>
        <WinBtn><Icon n="winClose" s={12} /></WinBtn>
      </WinButtons>
    </TitleRow>
    <TabRow>
      <AppTab><Icon n="logo" s={24} /></AppTab>
      <HomeTab>Home</HomeTab>
    </TabRow>
    <Ribbon>
      <Group $w={117}>
        <GroupBody $pr={3}><RibBtn $w={80}><Icon n="doc" s={32} /><RibLabel>New</RibLabel></RibBtn></GroupBody>
        <GroupLabel>Records Creation</GroupLabel>
      </Group>
      <Group $w={156}>
        <GroupBody $pl={4}>
          <RibBtn $w={42} $off><Icon n="saveBig" s={32} /><RibLabel>Save</RibLabel></RibBtn>
          <RibBtn $w={60} $off><Icon n="saveCloseBig" s={32} /><RibLabel>{"Save and\nClose"}</RibLabel></RibBtn>
          <RibBtn $w={44} $off><Icon n="undoBig" s={32} /><RibLabel>Cancel</RibLabel></RibBtn>
        </GroupBody>
        <GroupLabel $pr={2}>Save</GroupLabel>
      </Group>
      <Group $w={455}>
        <GroupBody $pl={3}>
          <RibBtn $w={69}><Icon n="suitcase" s={32} /><RibLabel>{"Auto Assign\nRooms"}</RibLabel></RibBtn>
          <RibBtn $w={49}><Icon n="invoice" s={32} /><RibLabel>{"Create\nInvoice"}</RibLabel></RibBtn>
          <RibBtn $w={55}><Icon n="payment" s={32} /><RibLabel>{"Create\nPayment"}</RibLabel></RibBtn>
          <RibBtn $w={64}><Icon n="mailBig" s={32} /><RibLabel>Send Email</RibLabel><RibCaret><Icon n="caret" s={7} /></RibCaret></RibBtn>
          <RibBtn $w={58}><Icon n="note" s={32} /><RibLabel>Add Note</RibLabel></RibBtn>
          <RibBtn $w={57}><Icon n="taskBig" s={32} /><RibLabel>Add Task</RibLabel></RibBtn>
          <RibBtn $w={49}><Icon n="check" s={32} /><RibLabel>{"Check\nSpelling"}</RibLabel></RibBtn>
          <RibBtn $w={43}><Icon n="xLarge" s={32} /><RibLabel>Delete</RibLabel></RibBtn>
        </GroupBody>
        <GroupLabel $pr={4}>Edit</GroupLabel>
      </Group>
      <Group $w={136}>
        <GroupBody $pr={3}><RibBtn $w={90}><Icon n="openRel" s={32} /><RibLabel>{"Open Related\nRecord"}</RibLabel></RibBtn></GroupBody>
        <GroupLabel $pr={3}>Open Related Record</GroupLabel>
      </Group>
      <Group $w={87}>
        <GroupBody $pl={10}>
          <SmallList>
            <SmallItem><Icon n="refresh" />Refresh</SmallItem>
            <SmallItem><Icon n="audit" />Audit Log</SmallItem>
            <SmallItem><Icon n="clip" />Reports</SmallItem>
          </SmallList>
        </GroupBody>
        <GroupLabel $pr={3}>View</GroupLabel>
      </Group>
      <Group $w={128}>
        <GroupBody $pl={13}>
          <SmallList>
            <SmallItem><Icon n="binoc" />Find</SmallItem>
            <SmallItem $off><Icon n="prevC" />Previous Record</SmallItem>
            <SmallItem><Icon n="nextC" />Next Record</SmallItem>
          </SmallList>
        </GroupBody>
        <GroupLabel $pr={3}>Records Navigation</GroupLabel>
      </Group>
      <Group $w={60}>
        <GroupBody $pr={5}><RibBtn $w={50}><Icon n="closeBig" s={32} /><RibLabel>Close</RibLabel></RibBtn></GroupBody>
        <GroupLabel $pr={5}>Close</GroupLabel>
      </Group>
      <Collapse $r={10}><Icon n="chevUp" s={10} /></Collapse>
    </Ribbon>
    <FormBox>
      <Legend>Accommodation Group Booking</Legend>
      <FormGrid>
        <Label>Reservation #:</Label>
        <Field $ro><FieldText $right>319</FieldText></Field>
        <span />
        <Label>Hotel:*</Label>
        <Field $ro><FieldText>*EP Lodging</FieldText><FieldBtn><Icon n="openRel" s={13} /></FieldBtn></Field>

        <Label>Event:</Label>
        <Field><FieldText>2146: Comics &amp; Pop Culture Expo</FieldText><FieldBtn><Icon n="chev" s={10} /></FieldBtn><FieldBtn><Icon n="openRel" s={13} /></FieldBtn></Field>
        <span />
        <Label>Check In:*</Label>
        <Field><FieldText>Thu May 13 2021</FieldText><FieldBtn><Icon n="chev" s={10} /></FieldBtn></Field>

        <Label>Contact Type:</Label>
        <Field><FieldText>Account</FieldText><FieldBtn><Icon n="chev" s={10} /></FieldBtn></Field>
        <Dots />
        <Label>Check Out:*</Label>
        <Field><FieldText>Mon May 17 2021</FieldText><FieldBtn><Icon n="chev" s={10} /></FieldBtn></Field>

        <Label>Booked By Account:*</Label>
        <Field><FieldText>Fortible Exhibitions</FieldText><FieldBtn><Icon n="chev" s={10} /></FieldBtn></Field>
        <span />
        <Label>Confirmation #:</Label>
        <Field $ro><FieldText>LG00133</FieldText></Field>

        <span /><span /><span />
        <Label>Available Online</Label>
        <Box />
      </FormGrid>
    </FormBox>
    <Tabs>
      {tabs.map(([t, ic, w, on]) => (
        <TabItem key={t} $w={w} $on={on}><Icon n={ic} />{t}</TabItem>
      ))}
    </Tabs>
    <Panel>
      <Toolbar>
        <Tool $ml={7}><Icon n="tbGrid" /></Tool>
        <ToolSep $ml={8} />
        <Tool $ml={8}><Icon n="tbColumns" /></Tool>
        <Tool $ml={2} $w={7}><Icon n="caret" s={7} /></Tool>
        <Tool $ml={11}><Icon n="tbWindow" /></Tool>
        <Tool $ml={9}><Icon n="tbBook" /></Tool>
        <Tool $ml={10} $w={18}><Icon n="tbPanel" s={18} /></Tool>
        <ToolSep $ml={6} />
        <Tool $ml={8}><Icon n="upG" /></Tool>
        <Tool $ml={10}><Icon n="downG" /></Tool>
        <ToolSep $ml={7} />
        <Tool $ml={9}><Icon n="funnel" /></Tool>
        <Tool $ml={2} $w={7}><Icon n="caret" s={7} /></Tool>
        <ToolSep $ml={8} />
        <SearchBox><SearchText>Text to search…</SearchText><SearchBtn><Icon n="search" s={14} /></SearchBtn></SearchBox>
        <ToolSep $ml={11} />
        <Tool $ml={8}><Icon n="tbSave" /></Tool>
        <Tool $ml={10} $w={7}><Icon n="caret" s={7} /></Tool>
        <ToolSep $ml={8} />
        <Tool $ml={9}><Icon n="tbZoom" /></Tool>
      </Toolbar>
      <Header>
        <HeadCell $w={92}>Room</HeadCell>
        <HeadCell $w={154}>Primary Guest</HeadCell>
        <HeadCell $w={154}>Booked By</HeadCell>
        <HeadCell $w={382}>Room Booking</HeadCell>
        <HeadCell $w={89}>Status</HeadCell>
        <HeadCell $w={187}>Rate Code</HeadCell>
        <HeadCell $w={81}>Rate</HeadCell>
      </Header>
      <GridBody>
        <Rows>
          <Row $h={24}><Gutter /><GroupCell $kind="date"><Icon n="triR" s={8} />Date: 5/13/2021 (Count=62)</GroupCell></Row>
          <Row $h={24}><Gutter><Icon n="triRDark" s={8} /></Gutter><GroupCell $kind="sel"><Icon n="triR" s={8} />Date: 5/14/2021 (Count=62)</GroupCell></Row>
          <Row $h={24}><Gutter /><GroupCell $kind="date"><Icon n="triD" s={8} />Date: 5/15/2021 (Count=62)</GroupCell></Row>
          <Row $h={24}><Gutter /><Indent /><GroupCell $kind="room"><Icon n="triD" s={8} />Room Group: Subgroup 1.A Single1 (Count=2)</GroupCell></Row>
          <DataRow room="120 S" code="Sng1 Summer Wnd" rate="$144.00" />
          <DataRow room="122 S" alt code="Sng1 Summer Wnd" rate="$144.00" />
          <Row $h={24}><Gutter /><Indent /><GroupCell $kind="room"><Icon n="triD" s={8} />Room Group: Subgroup 1.B Queen2 (Count=10)</GroupCell></Row>
          <DataRow room="101 Q" code="Qn2 1-2P Summer Wnd" rate="$218.00" />
          <DataRow room="103 Q" alt code="Qn2 1-2P Summer Wnd" rate="$218.00" />
        </Rows>
        <Scroll>
          <ScrollBtn><Icon n="chevUp" s={10} /></ScrollBtn>
          <Thumb />
          <ScrollFill />
          <ScrollBtn><Icon n="chev" s={10} /></ScrollBtn>
        </Scroll>
      </GridBody>
    </Panel>
    <StatusBar $h={24}><Grip /></StatusBar>
  </Win>
);

export default function App() {
  return (
    <>
      <Global />
      <Defs />
      <Back />
      <Front />
      <Arrow viewBox="0 0 1358 637">
        <polygon points="507,264 511,269 441,317 428,331 395,334 413,311 421,316" fill="#f5040a" />
      </Arrow>
    </>
  );
}
